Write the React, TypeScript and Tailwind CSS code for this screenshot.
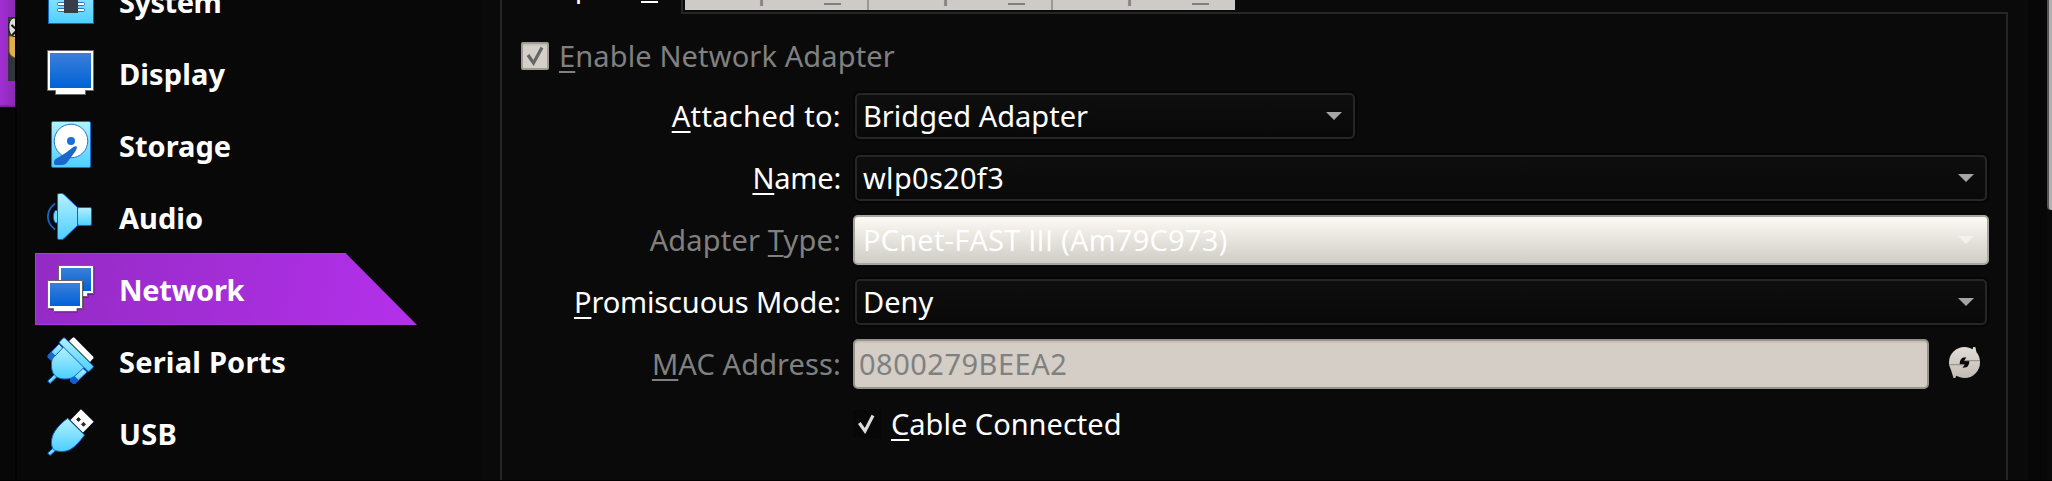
import type { ReactNode } from 'react';

const stroke = '#0f63cf';

function Defs() {
  return (
    <svg width="0" height="0" className="absolute">
      <defs>
        <linearGradient id="sky" x1="0" y1="0" x2="0" y2="1">
          <stop offset="0" stopColor="#b4f1ff" />
          <stop offset="1" stopColor="#4dcfff" />
        </linearGradient>
        <linearGradient id="screen" x1="0" y1="0" x2="0" y2="1">
          <stop offset="0" stopColor="#3b7fd9" />
          <stop offset="1" stopColor="#0062d6" />
        </linearGradient>
        <linearGradient id="stone" x1="0" y1="0" x2="0" y2="1">
          <stop offset="0" stopColor="#e2ddd6" />
          <stop offset="1" stopColor="#c2bcb4" />
        </linearGradient>
      </defs>
    </svg>
  );
}

function Icon({ children }: { children: ReactNode }) {
  return (
    <svg width="48" height="48" viewBox="0 0 48 48" className="shrink-0">
      {children}
    </svg>
  );
}

const SystemIcon = () => (
  <Icon>
    <rect x="1.5" y="1.5" width="45" height="45" fill="url(#sky)" stroke={stroke} />
    {[13.5, 19.5, 25.5, 31.5].map((y) => (
      <rect key={y} x="10.5" y={y} width="27" height="3" rx="1" fill="#fff" stroke="#2c6fb5" />
    ))}
    <rect x="17" y="11" width="14" height="25" fill="#373c48" />
  </Icon>
);

const DisplayIcon = () => (
  <Icon>
    <path d="M.5 1.5H46.5V41.5H38.5V45.5H8.5V41.5H.5Z" fill="#fff" stroke="#6a6a6a" />
    <rect x="3" y="4" width="41" height="35" fill="url(#screen)" />
  </Icon>
);

const StorageIcon = () => (
  <Icon>
    <rect x="4.5" y=".5" width="39" height="46" rx="1.5" fill="url(#sky)" stroke="#1a6fd6" />
    <circle cx="24" cy="20" r="16.8" fill="#fff" stroke="#2a72cc" />
    <circle cx="24" cy="20" r="4" fill="#1a6fd6" />
    <path d="M29.700 25.700C30.200 27 29 29.500 27.500 31.500L20.500 41C19 43 17.500 44 15 44H8.500Q7 44 7 42C7 39.500 7.800 38.400 9.500 37.400L18.500 32L26 26.300C27.500 25.300 29.300 24.800 29.700 25.700Z" fill="#1867cc" />
  </Icon>
);

const AudioIcon = () => (
  <Icon>
    <path d="M8 10.500C-1.500 18 -1.500 29.500 8 36.500" fill="none" stroke="#1763c4" strokeWidth="1.800" />
    <path d="M10.500 17.500H8.500C5.800 19.500 5.800 27.800 8.500 29.800H10.500Z" fill="#6fdcff" stroke={stroke} />
    <rect x="30.500" y="14.500" width="14" height="18" rx="1.500" fill="url(#sky)" stroke={stroke} />
    <path d="M10.500 2Q10.500 .5 12 .5H14.500Q16 .5 17 1.500L30.500 14.500V32.500L17 45.500Q16 46.500 14.500 46.500H12Q10.500 46.500 10.500 45Z" fill="url(#sky)" stroke={stroke} />
  </Icon>
);

const NetworkIcon = () => (
  <Icon>
    <path d="M12.500 1.500H47.500V30H41.500V33H20V30H12.500Z" fill="#000" opacity=".3" />
    <path d="M11.500 .5H46.500V28.500H40.500V31.500H18.500V28.500H11.500Z" fill="#fff" stroke="#666" />
    <rect x="14" y="3" width="30" height="23" fill="url(#screen)" />
    <path d="M1.500 16.500H36.500V44.500H31V47.500H8V44.500H1.500Z" fill="#000" opacity=".3" />
    <path d="M.5 15.500H35.500V43.500H30V46.500H6.500V43.500H.5Z" fill="#fff" stroke="#666" />
    <rect x="3" y="18" width="30" height="23" fill="url(#screen)" />
  </Icon>
);

const SerialIcon = () => (
  <Icon>
    <path d="M22 4L25.700 .7Q26.500 0 27.500 .8L46 19.500Q46.800 20.500 46.300 21.300L43 25Z" fill="#fff" />
    <path d="M12 7L1 18.500L6 23.500L17 12.500Z" fill="url(#sky)" stroke={stroke} />
    <path d="M4.500 14.800L.5 18.700V20.500L4 23.700L9 19Z" fill="#1667cf" />
    <path d="M35 30.500L23.500 42L28 46.500L40 35Z" fill="url(#sky)" stroke={stroke} />
    <path d="M27 38.500L23 42.500V44.500L26 47H28L31.500 43Z" fill="#0f5fd0" />
    <path d="M8.500 36.500L.7 44L3 46.500L10.800 39Z" fill="#6fdcff" stroke={stroke} />
    <path d="M17 9.500L7.500 19.500C4.500 22 4.500 25 4.500 28C4.300 37 9 42 18 42C23 42 26.500 40.500 29 38L37.500 30Z" fill="url(#sky)" stroke={stroke} />
    <path d="M12.500 5L16 1.200Q17 .3 18 1.200L46 28.700Q46.700 29.700 46 30.500L42.500 34Q41.500 34.800 40.500 34L12.800 6.500Q12 5.500 12.500 5Z" fill="url(#sky)" stroke={stroke} />
  </Icon>
);

const UsbIcon = () => (
  <Icon>
    <path d="M34 .3L46.700 12.700L36 23.500L23.500 11Z" fill="#fff" />
    <path d="M31.500 8.500L33.500 10.500L31.500 12.500L29.500 10.500Z M36.500 13.300L38.500 15.300L36.500 17.300L34.500 15.300Z" fill="#2b2b2b" stroke="#2b2b2b" />
    <path d="M7.500 37.800L.7 44L3 46.500L9.800 40.500Z" fill="#6fdcff" stroke={stroke} />
    <path d="M20.700 9.300L37.500 26C33 32.500 28 37.500 24 40C19 43 13 43 8 41.500Q5.500 40.500 4.800 37C4 32 4.800 27 8 22C11 17.500 16 12.500 20.700 9.300Z" fill="url(#sky)" stroke={stroke} />
  </Icon>
);

const RefreshIcon = () => (
  <svg width="32" height="32" viewBox="0 0 32 32" className="shrink-0">
    <path d="M0 17.700V15.500A15.500 15.500 0 0 1 15.500 0C19 0 21.500 1 23.500 2.300L24.300 0H26.300L27.500 5.300C30 8 31 12 31 15.500A15.500 15.500 0 0 1 15.500 31C12.500 31 9.500 30 7.300 28.800L6.300 31H4.500L2.500 24.500Z" fill="url(#stone)" />
    <path d="M13.500 10.700L17.300 10.300L15.300 13.700H20.300C20.500 16.500 19.500 19 17.500 20.300L13.500 20.700L15.500 17.700H10.700C10.500 14.500 11.500 12 13.500 10.700Z" fill="#0a0a0a" />
    <path d="M15.500 13.700H31M0 17.700H15.500" stroke="#8d8983" strokeWidth="1" />
  </svg>
);

const Key = ({ children }: { children: ReactNode }) => (
  <span className="underline decoration-2 underline-offset-[4px] [text-decoration-skip-ink:none]">{children}</span>
);

const items = [
  { name: 'System', icon: <SystemIcon />, cls: 'tracking-[-0.5px]' },
  { name: 'Display', icon: <DisplayIcon />, cls: 'tracking-[0.1px]' },
  { name: 'Storage', icon: <StorageIcon />, cls: '' },
  { name: 'Audio', icon: <AudioIcon />, cls: '' },
  { name: 'Network', icon: <NetworkIcon />, cls: 'tracking-[-0.3px]' },
  { name: 'Serial Ports', icon: <SerialIcon />, cls: 'tracking-[0.2px]' },
  { name: 'USB', icon: <UsbIcon />, cls: 'tracking-[0.3px]' },
];

function Sidebar() {
  return (
    <nav className="-mt-[35px] flex w-[464px] shrink-0 flex-col bg-[#080808] pl-[18px]">
      {items.map(({ name, icon, cls }) => (
        <div key={name} className="grid h-[72px] w-[382px] shrink-0">
          {name === 'Network' && (
            <svg width="382" height="72" viewBox="0 0 382 72" className="col-start-1 row-start-1">
              <defs>
                <linearGradient id="active" gradientUnits="userSpaceOnUse" x1="0" y1="0" x2="350" y2="72">
                  <stop offset="0" stopColor="#942bc4" />
                  <stop offset="1" stopColor="#b130e8" />
                </linearGradient>
              </defs>
              <path d="M0 0H310.500L382 72H0Z" fill="url(#active)" />
              <path d="M310.500 .5H.5V71.500H381" fill="none" stroke="#b035e4" />
            </svg>
          )}
          <div className="col-start-1 row-start-1 flex items-center gap-[24px] pl-3">
            {icon}
            <span className={`pt-px text-[29px] leading-10 font-bold whitespace-nowrap text-white ${cls}`}>{name}</span>
          </div>
        </div>
      ))}
    </nav>
  );
}

const Arrow = ({ color }: { color: string }) => (
  <svg width="16" height="8" viewBox="0 0 16 8" className="shrink-0">
    <path d="M0 0H16L8 8Z" fill={color} />
  </svg>
);

function Combo({ children, wide }: { children: ReactNode; wide?: boolean }) {
  return (
    <div
      className={`ml-[2px] flex h-[46px] items-center justify-between rounded-[5px] border-2 border-[#262626] bg-linear-to-b from-[#0e0e0e] to-[#090909] pr-[11px] pl-[6px] text-white shadow-[0_0_0_2px_#060606] ${wide ? 'w-[1132px]' : 'w-[500px]'}`}
    >
      {children}
      <Arrow color="#a5a5a5" />
    </div>
  );
}

function Row({ label, dim, children }: { label: ReactNode; dim?: boolean; children: ReactNode }) {
  return (
    <div className="flex h-[62px] items-center">
      <div className={`w-[339px] shrink-0 text-right whitespace-nowrap ${dim ? 'text-[#808080]' : 'text-white'}`}>{label}</div>
      <div className="ml-[12px] flex items-center">{children}</div>
    </div>
  );
}

function Tabs() {
  return (
    <div className="flex h-3 items-start whitespace-nowrap">
      <div className="-mt-12 mr-[2px] h-[60px] w-[183px] shrink-0 border-r-2 border-l-2 border-[#262626] pl-[19px] leading-[68px] tracking-[0.4px] text-white">
        Adapter <Key>1</Key>
      </div>
      {[2, 3, 4].map((n) => (
        <div
          key={n}
          className="-mt-[50px] h-[60px] w-[184px] shrink-0 border-r-2 border-[#9b9893] bg-[#cecbc6] pl-[19px] leading-[76px] tracking-[0.4px] text-[#808080] last:w-[182px] last:border-r-0"
        >
          Adapter <Key>{n}</Key>
        </div>
      ))}
    </div>
  );
}

export default function App() {
  return (
    <div className="flex h-[481px] w-[2052px] overflow-hidden border-b border-black bg-[#0a0a0a] font-['Noto_Sans',sans-serif] text-[29px] leading-10">
      <Defs />
      <div className="flex w-[17px] shrink-0 flex-col border-r-2 border-[#030303] bg-[#070707]">
        <div className="flex h-[107px] justify-end border-b-2 border-[#7a2599] bg-linear-to-r from-[#a32fd3] to-[#8a29b3] pt-[17px]">
          <svg width="7" height="64" viewBox="0 0 7 64">
            <rect width="9" height="64" fill="#30353c" />
            <path d="M1 19H9V41Q3 41 1 35Z" fill="#dfb04c" stroke="#7b4a17" />
            <path d="M9 1H5Q.8 3 .8 10Q.8 18 6 19.500H9Z" fill="#dcdcd4" stroke="#111" />
            <path d="M3.500 8L9 13L4.500 18" fill="none" stroke="#111" strokeWidth="2" />
          </svg>
        </div>
      </div>
      <Sidebar />
      <main className="flex w-[1547px] shrink-0 flex-col pl-[19px]">
        <Tabs />
        <section className="flex h-[469px] w-[1508px] flex-col border-r-2 border-l-2 border-[#262626]">
          <div className="flex h-[2px] shrink-0 justify-end">
            <div className="w-[1325px] bg-[#262626]" />
          </div>
          <div className="mt-[22px] flex h-[40px] items-center pl-[19px] text-[#808080]">
            <span className="flex size-7 items-center justify-center rounded-[2px] border-2 border-[#a09c95] bg-[#d4d0c9] shadow-[inset_0_2px_0_#c8c4bd]">
              <svg width="18" height="20" viewBox="0 0 18 20">
                <path d="M2 9L7.500 17L16 1.500" fill="none" stroke="#666" strokeWidth="3.200" />
              </svg>
            </span>
            <span className="ml-[10px] tracking-[0.13px]"><Key>E</Key>nable Network Adapter</span>
          </div>
          <div className="mt-[9px] flex flex-col">
            <Row label={<span className="tracking-[0.35px]"><Key>A</Key>ttached to:</span>}>
              <Combo>Bridged Adapter</Combo>
            </Row>
            <Row label={<span className="tracking-[-0.2px]"><Key>N</Key>ame:</span>}>
              <Combo wide><span className="tracking-[0.3px]">wlp0s20f3</span></Combo>
            </Row>
            <Row dim label={<span className="tracking-[0.17px]">Adapter <Key>T</Key>ype:</span>}>
              <div className="flex h-[50px] w-[1136px] items-center justify-between rounded-[5px] border-2 border-[#a9a69f] bg-linear-to-b from-[#fdfaf5] to-[#d0cdc7] pr-[13px] pl-[8px] text-white">
                <span className="font-['Open_Sans',sans-serif] tracking-[0.28px]">PCnet-FAST III (Am79C973)</span>
                <Arrow color="#f3f1ee" />
              </div>
            </Row>
            <Row label={<span className="tracking-[-0.15px]"><Key>P</Key>romiscuous Mode:</span>}>
              <Combo wide>Deny</Combo>
            </Row>
            <Row dim label={<span className="tracking-[0.12px]"><Key>M</Key>AC Address:</span>}>
              <div className="flex h-[50px] w-[1076px] items-center rounded-[5px] border-2 border-[#96938d] bg-[#d4cec7] pl-[4px] tracking-[0.5px] text-[#808080] shadow-[inset_0_2px_0_#c8c2bb]">
                0800279BEEA2
              </div>
              <div className="-mt-[2px] ml-5">
                <RefreshIcon />
              </div>
            </Row>
            <div className="flex h-[58px] items-center pl-[351px] text-white">
              <span className="flex size-7 items-center justify-center bg-[#070707]">
                <svg width="18" height="20" viewBox="0 0 18 20">
                  <path d="M1.300 9L7 17L15 1.500" fill="none" stroke="#dcdcdc" strokeWidth="3.200" />
                </svg>
              </span>
              <span className="ml-[10px]"><Key>C</Key>able Connected</span>
            </div>
          </div>
        </section>
      </main>
      <div className="flex flex-1 justify-end bg-[#070707]">
        <div className="w-[5px] bg-[#0a0a0a]">
          <div className="h-[210px] rounded-bl-[4px] border-l-2 border-[#555] bg-[#b3b1b2]" />
        </div>
      </div>
    </div>
  );
}
